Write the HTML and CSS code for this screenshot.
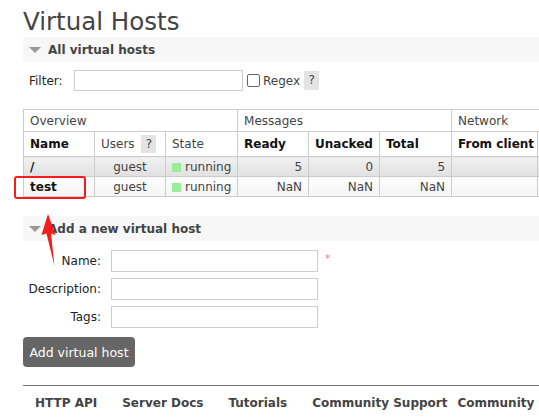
FILE: index.html
```html
<!DOCTYPE html>
<html>
<head>
<meta charset="utf-8">
<link rel="stylesheet" href="styles.css">
</head>
<body>
<div class="page">
  <h1 class="title">Virtual Hosts</h1>
  <div class="section-head"><span class="tri"></span>All virtual hosts</div>
  <div class="filter-row">
    <label class="filter-label">Filter:</label>
    <input class="filter-input" type="text">
    <span class="cb"></span>
    <span class="regex">Regex</span>
    <span class="help">?</span>
  </div>
  <table class="vh">
    <colgroup>
      <col class="c71"><col class="c71"><col class="c72"><col class="c71"><col class="c71"><col class="c72"><col class="c86"><col class="c86">
    </colgroup>
    <tr class="group">
      <td colspan="3">Overview</td>
      <td colspan="3">Messages</td>
      <td colspan="2">Network</td>
    </tr>
    <tr class="head">
      <th>Name</th>
      <th class="normal">Users <span class="help sm">?</span></th>
      <th class="normal">State</th>
      <th>Ready</th>
      <th>Unacked</th>
      <th>Total</th>
      <th>From client</th>
      <th>To client</th>
    </tr>
    <tr class="r1">
      <td class="name">/</td>
      <td class="c">guest</td>
      <td><span class="sq"></span>running</td>
      <td class="r">5</td>
      <td class="r">0</td>
      <td class="r">5</td>
      <td></td>
      <td></td>
    </tr>
    <tr class="r2">
      <td class="name">test</td>
      <td class="c">guest</td>
      <td><span class="sq"></span>running</td>
      <td class="r">NaN</td>
      <td class="r">NaN</td>
      <td class="r">NaN</td>
      <td></td>
      <td></td>
    </tr>
  </table>
  <div class="section-head second"><span class="tri"></span>Add a new virtual host</div>
  <div class="form">
    <div class="frow"><label>Name:</label><input type="text"><span class="req">*</span></div>
    <div class="frow"><label>Description:</label><input type="text"></div>
    <div class="frow"><label>Tags:</label><input type="text"></div>
  </div>
  <button class="btn">Add virtual host</button>
  <div class="footer">
    <a>HTTP API</a><a>Server Docs</a><a>Tutorials</a><a class="tight">Community Support</a><a>Community Slack</a>
  </div>
</div>
<div class="box"></div>
<svg class="arrow" width="20" height="60" viewBox="0 0 20 60">
  <path d="M7 0 L0.5 21 L5.5 19.5 L13.5 52 L10 19.5 L14.5 21 Z" fill="#f41c1c"/>
</svg>
</body>
</html>
```
FILE: styles.css
```css
html, body {
  margin: 0;
  padding: 0;
  background: #fff;
  overflow: hidden;
}
body {
  width: 539px;
  height: 420px;
  position: relative;
  font-family: "DejaVu Sans", Verdana, sans-serif;
  font-size: 12px;
  color: #444;
}
.page {
  padding-left: 23px;
  width: 700px;
}
.title {
  margin: 0;
  padding-top: 7px;
  font-size: 24.5px;
  font-weight: normal;
  line-height: 30px;
  color: #444;
}
.section-head {
  width: 516px;
  height: 25px;
  background: #f7f7f7;
  font-weight: bold;
  font-size: 12px;
  color: #444;
  display: flex;
  align-items: center;
  box-sizing: border-box;
  padding-left: 6px;
}
.tri {
  width: 0;
  height: 0;
  border-left: 6px solid transparent;
  border-right: 6px solid transparent;
  border-top: 6px solid #999;
  margin-right: 7px;
}
.filter-row {
  display: flex;
  align-items: center;
  height: 21px;
  margin-top: 8px;
  padding-left: 6px;
  font-size: 12px;
  color: #222;
}
.filter-label { width: 45px; }
.filter-input {
  width: 169px;
  height: 21px;
  box-sizing: border-box;
  border: 1px solid #ccc;
  margin: 0;
  padding: 0;
}
.cb {
  width: 11px;
  height: 11px;
  border: 1px solid #666;
  border-radius: 2px;
  margin-left: 4px;
  margin-right: 3px;
}
.regex { color: #444; }
.help {
  display: inline-block;
  width: 15px;
  height: 19px;
  line-height: 19px;
  text-align: center;
  background: #e4e4e4;
  margin-left: 4px;
  color: #444;
}
.help.sm { margin-left: 3px; height: 18px; line-height: 18px; }
.vh {
  margin-top: 18px;
  border-collapse: collapse;
  table-layout: fixed;
  width: 600px;
  font-size: 12px;
}
.c71 { width: 71px; }
.c72 { width: 72px; }
.c86 { width: 86px; }
.vh td, .vh th {
  border: 1px solid #ccc;
  padding: 0 6px;
  white-space: nowrap;
  overflow: hidden;
  text-align: left;
}
.group td { height: 21px; color: #444; }
.head th { height: 24px; font-weight: bold; color: #111; font-size: 12px; }
.head th.normal { font-weight: normal; color: #444; font-size: 12px; }
.r1 td { height: 19px; background: linear-gradient(#f1f1f1, #e0e0e0); }
.r2 td { height: 19px; background: linear-gradient(#fdfdfd, #f5f5f5); }
.vh td.name { font-weight: bold; color: #111; font-size: 12px; }
.vh td.c { text-align: center; }
.vh td.r { text-align: right; }
.sq {
  display: inline-block;
  width: 9px;
  height: 9px;
  background: #99ee99;
  margin-right: 4px;
  vertical-align: -1px;
}
.second { margin-top: 19px; }
.form {
  margin-top: 9px;
  display: flex;
  flex-direction: column;
  gap: 6px;
}
.frow {
  display: flex;
  align-items: center;
  height: 22px;
}
.frow label {
  width: 78px;
  text-align: right;
  color: #222;
  margin-right: 10px;
}
.frow input {
  width: 207px;
  height: 22px;
  box-sizing: border-box;
  border: 1px solid #ccc;
  margin: 0;
  padding: 0;
}
.req {
  color: #f08080;
  margin-left: 7px;
  font-size: 11px;
  align-self: flex-start;
  margin-top: 2px;
}
.btn {
  margin-top: 9px;
  width: 112px;
  height: 30px;
  background: #666;
  color: #fff;
  border: none;
  border-radius: 4px;
  font-family: "DejaVu Sans", Verdana, sans-serif;
  font-size: 12.5px;
  padding: 0;
  display: block;
}
.footer {
  margin-top: 18px;
  width: 516px;
  border-top: 1px solid #777;
  display: flex;
  padding-top: 10px;
  padding-left: 12px;
  white-space: nowrap;
  font-weight: bold;
  font-size: 12px;
  color: #444;
}
.footer a { margin-right: 25px; }
.footer a.tight { margin-right: 10px; }
.box {
  position: absolute;
  left: 14px;
  top: 176px;
  width: 68px;
  height: 19px;
  border: 2px solid #f41c1c;
  border-radius: 3px;
}
.arrow {
  position: absolute;
  left: 41px;
  top: 214px;
}
```
